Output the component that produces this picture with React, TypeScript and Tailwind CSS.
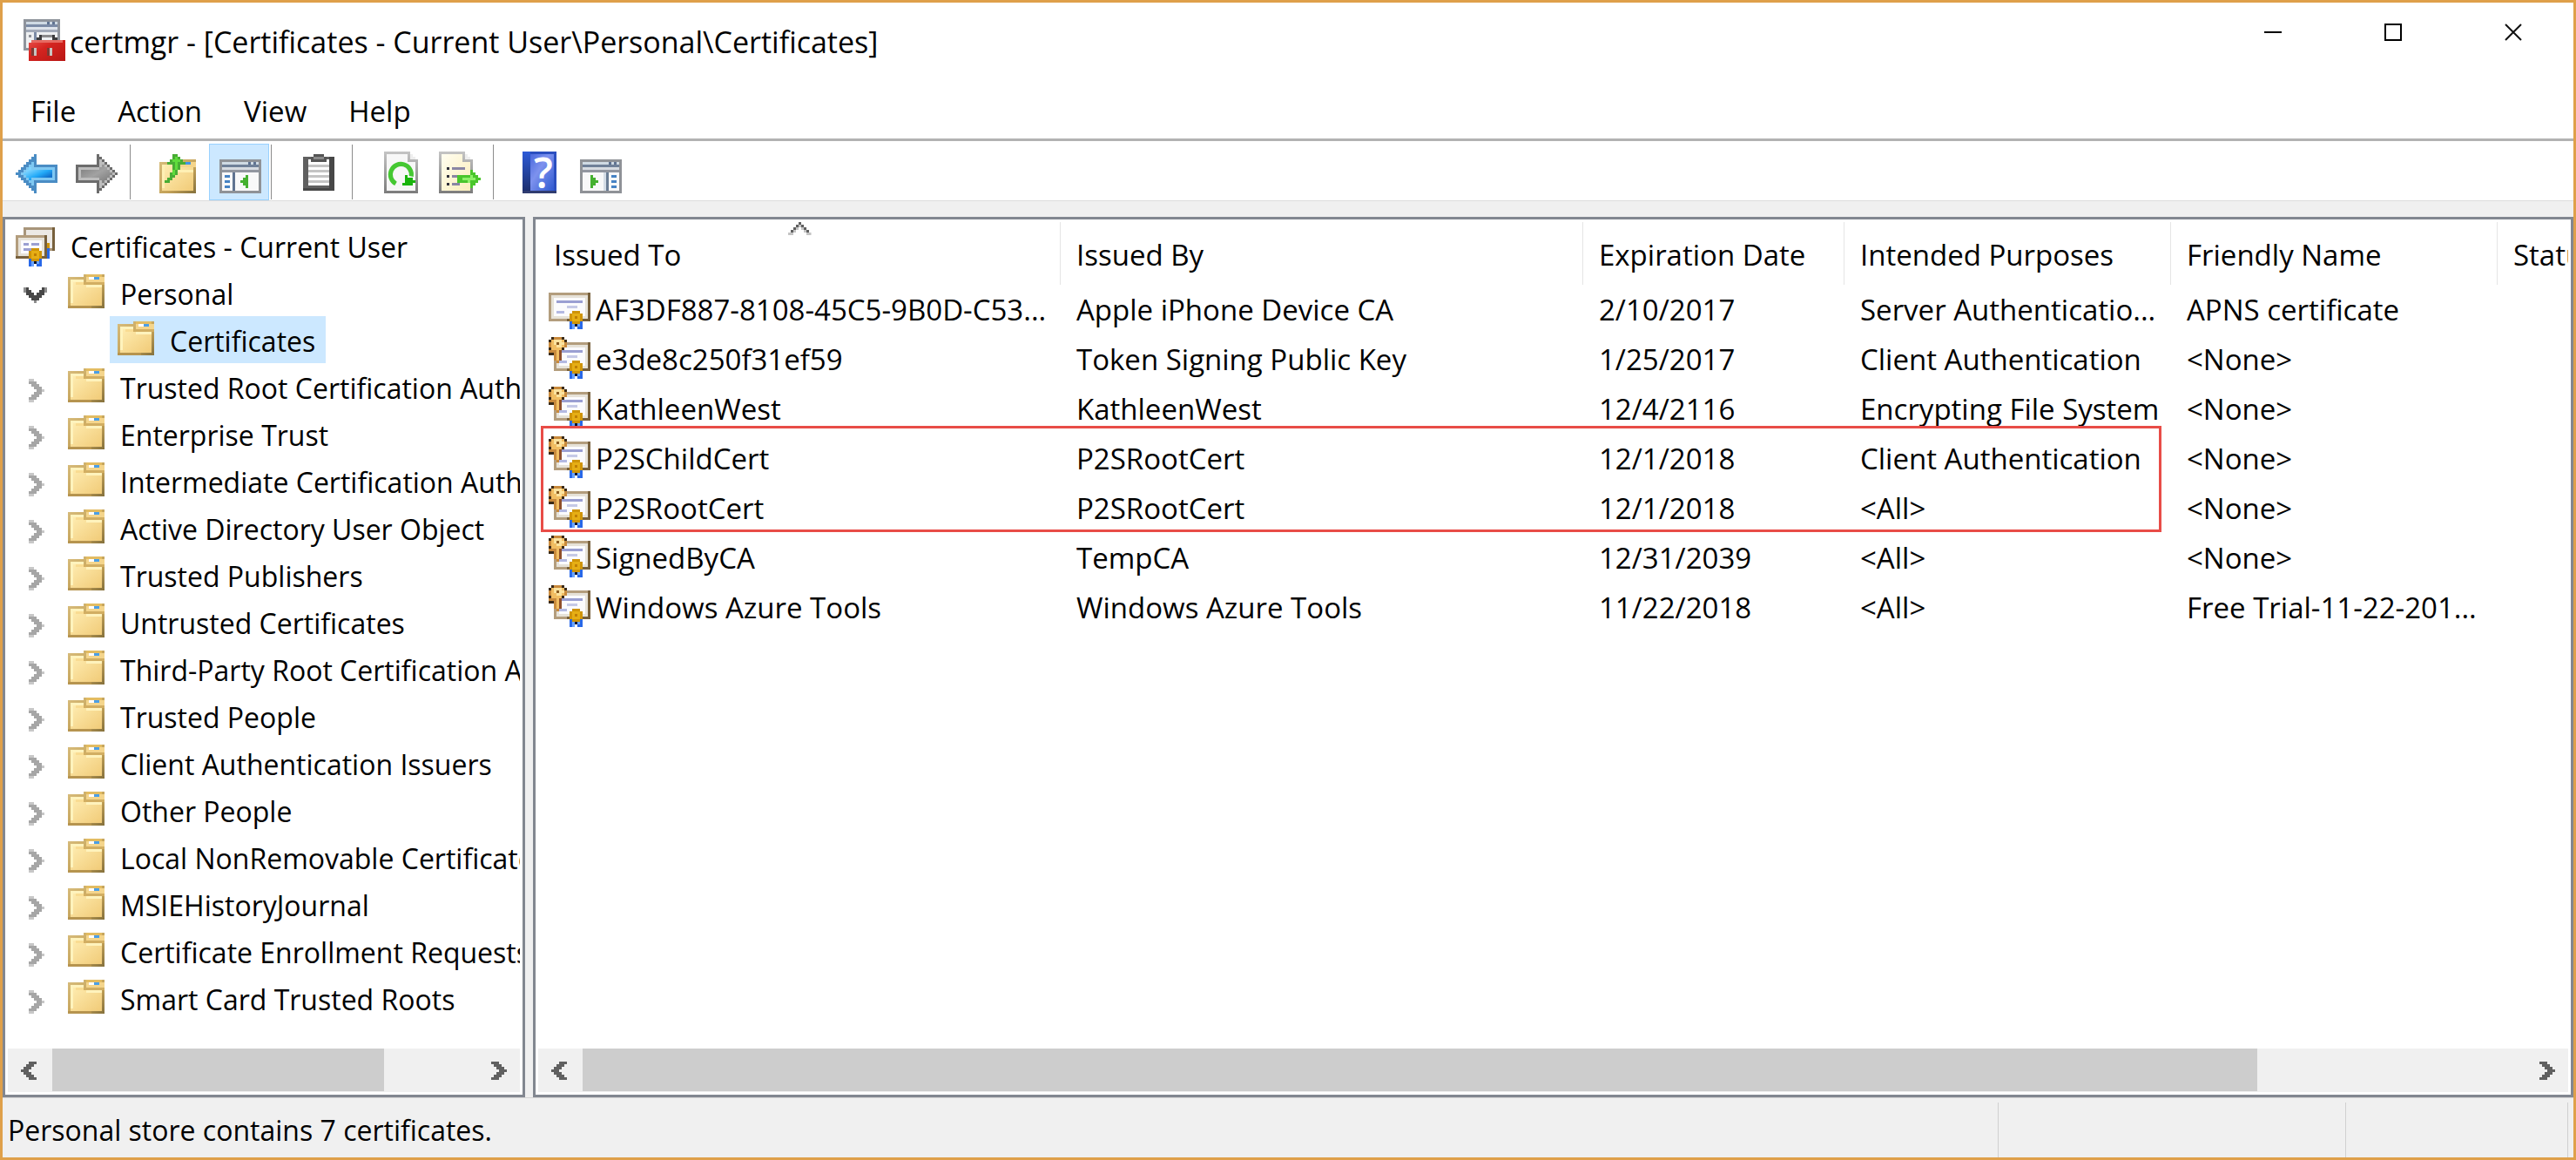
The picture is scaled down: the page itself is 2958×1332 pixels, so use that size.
import type { ReactNode } from 'react'
import { clsx } from 'clsx'

type TreeNode = {
  label: string
  level: 0 | 1 | 2
  state?: 'open' | 'closed'
  selected?: boolean
}

const tree: TreeNode[] = [
  { label: 'Certificates - Current User', level: 0 },
  { label: 'Personal', level: 1, state: 'open' },
  { label: 'Certificates', level: 2, selected: true },
  { label: 'Trusted Root Certification Authorities', level: 1, state: 'closed' },
  { label: 'Enterprise Trust', level: 1, state: 'closed' },
  { label: 'Intermediate Certification Authorities', level: 1, state: 'closed' },
  { label: 'Active Directory User Object', level: 1, state: 'closed' },
  { label: 'Trusted Publishers', level: 1, state: 'closed' },
  { label: 'Untrusted Certificates', level: 1, state: 'closed' },
  { label: 'Third-Party Root Certification Authorities', level: 1, state: 'closed' },
  { label: 'Trusted People', level: 1, state: 'closed' },
  { label: 'Client Authentication Issuers', level: 1, state: 'closed' },
  { label: 'Other People', level: 1, state: 'closed' },
  { label: 'Local NonRemovable Certificates', level: 1, state: 'closed' },
  { label: 'MSIEHistoryJournal', level: 1, state: 'closed' },
  { label: 'Certificate Enrollment Requests', level: 1, state: 'closed' },
  { label: 'Smart Card Trusted Roots', level: 1, state: 'closed' },
]

const columns = [
  'Issued To',
  'Issued By',
  'Expiration Date',
  'Intended Purposes',
  'Friendly Name',
  'Status',
]

const certificates = [
  ['AF3DF887-8108-45C5-9B0D-C53...', 'Apple iPhone Device CA', '2/10/2017', 'Server Authenticatio...', 'APNS certificate'],
  ['e3de8c250f31ef59', 'Token Signing Public Key', '1/25/2017', 'Client Authentication', '<None>'],
  ['KathleenWest', 'KathleenWest', '12/4/2116', 'Encrypting File System', '<None>'],
  ['P2SChildCert', 'P2SRootCert', '12/1/2018', 'Client Authentication', '<None>'],
  ['P2SRootCert', 'P2SRootCert', '12/1/2018', '<All>', '<None>'],
  ['SignedByCA', 'TempCA', '12/31/2039', '<All>', '<None>'],
  ['Windows Azure Tools', 'Windows Azure Tools', '11/22/2018', '<All>', 'Free Trial-11-22-201...'],
]

// All icons are drawn on a 16x16 grid, three screen pixels per cell.
function Icon({ children }: { children: ReactNode }) {
  return (
    <svg
      viewBox="0 0 16 16"
      className="size-12 shrink-0"
      shapeRendering="crispEdges"
      aria-hidden="true"
    >
      {children}
    </svg>
  )
}

function Gradients() {
  return (
    <svg className="absolute size-0" aria-hidden="true">
      <defs>
        <linearGradient id="folder" x1="0" y1="0" x2="1" y2="1">
          <stop offset="0" stopColor="#ffeeb4" />
          <stop offset="1" stopColor="#f1cb78" />
        </linearGradient>
        <linearGradient id="folder-edge" x1="0" y1="0" x2="1" y2="1">
          <stop offset="0" stopColor="#d8bd7c" />
          <stop offset="0.6" stopColor="#c4a258" />
          <stop offset="1" stopColor="#84703c" />
        </linearGradient>
        <linearGradient id="blue-arrow" x1="0" y1="0" x2="1" y2="1">
          <stop offset="0.2" stopColor="#7fd4ff" />
          <stop offset="0.55" stopColor="#22aaf8" />
          <stop offset="0.8" stopColor="#1273cf" />
        </linearGradient>
        <linearGradient id="gray-arrow" x1="0" y1="0" x2="1" y2="1">
          <stop offset="0" stopColor="#7a7a7a" />
          <stop offset="0.5" stopColor="#a2a2a2" />
          <stop offset="1" stopColor="#757575" />
        </linearGradient>
        <linearGradient id="page-edge" x1="0" y1="0" x2="0" y2="1">
          <stop offset="0" stopColor="#c4c4c4" />
          <stop offset="1" stopColor="#7c7c7c" />
        </linearGradient>
        <linearGradient id="cream" x1="0" y1="0" x2="1" y2="1">
          <stop offset="0" stopColor="#fffdf0" />
          <stop offset="1" stopColor="#fbeebb" />
        </linearGradient>
        <linearGradient id="red" x1="0" y1="0" x2="1" y2="1">
          <stop offset="0" stopColor="#e8504a" />
          <stop offset="0.4" stopColor="#d42420" />
          <stop offset="1" stopColor="#b81614" />
        </linearGradient>
        <linearGradient id="book" x1="0" y1="0" x2="1" y2="1">
          <stop offset="0" stopColor="#4a68dc" />
          <stop offset="0.4" stopColor="#7d92ee" />
          <stop offset="1" stopColor="#2f58d0" />
        </linearGradient>
        <linearGradient id="spine" x1="0" y1="0" x2="0" y2="1">
          <stop offset="0" stopColor="#2c5ad8" />
          <stop offset="1" stopColor="#1b2c68" />
        </linearGradient>
      </defs>
    </svg>
  )
}

function FolderIcon() {
  return (
    <Icon>
      <path d="M1 2H7V1H15V14H1Z" fill="url(#folder-edge)" />
      <path d="M2 3H7V5H14V13H2Z" fill="url(#folder)" />
      <path d="M2 3H7V4H3V12H2ZM8 5H14V6H8Z" fill="#fff3bd" />
      <path d="M4 4H7V5H4Z" fill="#f9dc92" />
      <path d="M8 1H14V2H8Z" fill="#e3bc62" />
      <path d="M8 2H15V4H8Z" fill="#f4d58c" />
      <path d="M7 4H15V5H7Z" fill="#d2ae62" />
      <path d="M9 2H11V3H9Z" fill="#fff" />
      <path d="M11 2H13V3H11Z" fill="#4b9fe6" />
      <path d="M1 13H10V14H1Z" fill="#b6944f" />
    </Icon>
  )
}

function Seal({ x, y }: { x: number; y: number }) {
  return (
    <g transform={`translate(${x} ${y})`}>
      <path d="M0 3H5V6H0Z" fill="#2868e8" />
      <path d="M1 4H2V5H1ZM3 4H4V5H3ZM1 5H2V6H1Z" fill="#6aa4ff" />
      <path d="M2 4H3V5H2Z" fill="#0a1430" />
      <path d="M2 5H3V6H2Z" fill="#fff" />
      <path d="M1 -1H4V0H5V3H4V4H1V3H0V0H1Z" fill="#cf9408" />
      <path d="M1 0H4V3H1Z" fill="#e6ae14" />
      <path d="M2 1H3V2H2Z" fill="#c07f04" />
    </g>
  )
}

function CertificateIcon({ hasKey }: { hasKey: boolean }) {
  return (
    <Icon>
      <path d={hasKey ? 'M2 2H16V13H2Z' : 'M0 2H16V13H0Z'} fill="#b39d7d" />
      <path d="M15 2H16V13H15ZM7 12H16V13H7Z" fill="#77603c" />
      <path d={hasKey ? 'M3 3H15V12H3Z' : 'M1 3H15V12H1Z'} fill="#e6e2d8" />
      <path d={hasKey ? 'M4 4H14V11H4Z' : 'M2 4H14V11H2Z'} fill="#fbfbfd" />
      <path d={hasKey ? 'M5 5H13V6H5Z' : 'M3 5H13V6H3Z'} fill="#9a9fd2" />
      <path d="M7 7H11V8H7Z" fill="#c5c9e6" />
      <path d={hasKey ? 'M4 9H7V10H4Z' : 'M3 9H6V10H3Z'} fill="#b3b9e2" />
      <Seal x={8} y={10} />
      {hasKey && (
        <>
          <path d="M1 0H6V1H7V4H6V5H5V9H4V10H3V9H2V7H0V5H1V4H0V1H1Z" fill="#c98a3c" />
          <path d="M1 1H6V4H5V5H4V9H3V5H1Z" fill="#f1bd62" />
          <path d="M2 1H5V2H6V3H5V4H3V3H2Z" fill="#fbe3a0" />
          <path d="M3 2H4V3H3Z" fill="#8a5a20" />
          <path d="M1 0H2V1H1ZM5 0H6V1H5ZM0 1H1V2H0ZM6 1H7V2H6ZM0 4H1V5H0ZM0 6H2V7H0ZM5 4H6V5H5Z" fill="#3a2a18" />
          <path d="M4 5H5V9H4Z" fill="#8f4f2a" />
        </>
      )}
    </Icon>
  )
}

function CertificateStoreIcon() {
  return (
    <Icon>
      <path d="M3 1H15V10H3Z" fill="#a8957a" />
      <path d="M14 1H15V10H14Z" fill="#77603c" />
      <path d="M4 2H14V9H4Z" fill="#ece9e4" />
      <path d="M12 7H13V9H12Z" fill="#cf9408" />
      <path d="M12 9H13V13H12Z" fill="#2868e8" />
      <path d="M0 4H12V13H0Z" fill="#b39d7d" />
      <path d="M11 4H12V13H11ZM0 12H12V13H0Z" fill="#77603c" />
      <path d="M1 5H11V12H1Z" fill="#e6e2d8" />
      <path d="M2 6H10V11H2Z" fill="#fbfbfd" />
      <path d="M3 7H5V8H3ZM6 7H9V8H6ZM3 9H6V10H3Z" fill="#9a9fd2" />
      <Seal x={5} y={10} />
    </Icon>
  )
}

function ConsoleIcon({ side }: { side: 'left' | 'right' }) {
  return (
    <Icon>
      <path d="M0 3H16V16H0Z" fill="#8f9297" />
      <path d="M1 4H15V5H1Z" fill="#cfdae3" />
      <path d="M11 4H12V5H11ZM13 4H14V5H13Z" fill="#5f7391" />
      <path d="M1 5H15V6H1Z" fill="#6f8098" />
      <path d="M1 6H15V7H1Z" fill="#d6dbe1" />
      <path d="M1 7H15V8H1Z" fill="#9296a0" />
      <path d="M1 8H15V15H1Z" fill="#f8f8f9" />
      {side === 'left' ? (
        <>
          <path d="M2 9H4V10H2ZM2 11H4V12H2ZM2 13H4V14H2Z" fill="#4783c4" />
          <path d="M5 8H6V15H5Z" fill="#5f7391" />
          <path d="M10 9H11V14H10V13H9V12H8V11H9V10H10Z" fill="#45b030" />
        </>
      ) : (
        <>
          <path d="M12 9H14V10H12ZM12 11H14V12H12ZM12 13H14V14H12Z" fill="#4783c4" />
          <path d="M9 8H10V15H9Z" fill="#d5dde6" />
          <path d="M10 8H11V15H10Z" fill="#6b7d95" />
          <path d="M4 9H5V10H6V11H7V12H6V13H5V14H4Z" fill="#45b030" />
        </>
      )}
    </Icon>
  )
}

function AppIcon() {
  return (
    <Icon>
      <path d="M0 0H14V12H0Z" fill="#8f949c" />
      <path d="M1 1H13V2H1Z" fill="#cfdae3" />
      <path d="M9 1H10V2H9ZM11 1H12V2H11Z" fill="#5f7391" />
      <path d="M1 2H13V3H1Z" fill="#7b8ba6" />
      <path d="M1 3H13V4H1Z" fill="#dde3ea" />
      <path d="M1 4H13V5H1Z" fill="#a1a9b8" />
      <path d="M1 5H13V11H1Z" fill="#eef0f2" />
      <path d="M4 5H5V9H4Z" fill="#7b8ba6" />
      <path d="M2 6H3V7H2Z" fill="#8d9098" />
      <path d="M5 7H6V6H12V7H13V8H11V7H7V8H5Z" fill="#3b3b3d" />
      <path d="M7 6H11V7H7Z" fill="#8b8b8d" />
      <path d="M2 9H3V8H16V16H2Z" fill="url(#red)" />
      <path d="M3 8H15V9H3Z" fill="#e66a62" />
      <path d="M4 11H5V14H4ZM10 11H11V14H10Z" fill="#c9c4c0" />
      <path d="M3 11H4V14H3ZM9 11H10V14H9Z" fill="#7e3a34" />
    </Icon>
  )
}

function BackIcon() {
  return (
    <Icon>
      <path d="M0 8H1V7H2V6H3V5H4V4H5V3H6V2H7V1H8V5H16V12H8V16H7V15H6V14H5V13H4V12H3V11H2V10H1V9H0Z" fill="#4a8cc4" />
      <path d="M2 8H3V7H4V6H5V5H6V4H7V6H15V11H7V13H6V12H5V11H4V10H3V9H2Z" fill="#7fc8f2" />
      <path d="M3 8H4V7H5V6H6V7H14V10H6V11H5V10H4V9H3Z" fill="url(#blue-arrow)" />
    </Icon>
  )
}

function ForwardIcon() {
  return (
    <Icon>
      <path d="M16 8H15V7H14V6H13V5H12V4H11V3H10V2H9V1H8V5H0V12H8V16H9V15H10V14H11V13H12V12H13V11H14V10H15V9H16Z" fill="#6c6c6c" />
      <path d="M15 8H14V7H13V6H12V5H11V4H10V3H9V6H1V11H9V14H10V13H11V12H12V11H13V10H14V9H15Z" fill="#bdbdbd" />
      <path d="M14 8H13V7H12V6H11V5H10V6H9V7H2V10H9V11H10V12H11V11H12V10H13V9H14Z" fill="url(#gray-arrow)" />
    </Icon>
  )
}

function UpFolderIcon() {
  return (
    <Icon>
      <path d="M0 4H7V3H14V16H0Z" fill="url(#folder-edge)" />
      <path d="M1 5H13V15H1Z" fill="url(#folder)" />
      <path d="M8 4H14V6H8Z" fill="#f4d58c" />
      <path d="M7 7H13V8H7ZM1 5H2V14H1Z" fill="#fff0b4" />
      <path d="M10 4H12V5H10Z" fill="#3f95e8" />
      <path d="M5 1H7V2H8V3H9V4H10V5H8V7H7V9H6V10H5V11H4V12H2V11H3V10H4V8H5V5H3V4H4V3H5Z" fill="#48ad34" />
      <path d="M6 2H7V3H8V4H7V7H6V9H5V7H6V4H5V3H6Z" fill="#5fdc3c" />
    </Icon>
  )
}

function ClipboardIcon() {
  return (
    <Icon>
      <path d="M2 2H14V15H2Z" fill="#606060" />
      <path d="M12 2H14V15H2V14H12Z" fill="#474747" />
      <path d="M4 3H12V13H4Z" fill="#fff" />
      <path d="M4 5H12V6H4ZM4 7H12V8H4ZM4 9H12V10H4ZM4 11H12V12H4Z" fill="#c4c4c4" />
      <path d="M6 1H10V2H11V4H5V2H6Z" fill="#555" />
      <path d="M6 2H10V3H6Z" fill="#8a8a8a" />
    </Icon>
  )
}

function RefreshIcon() {
  return (
    <Icon>
      <path d="M2 0H12V1H13V2H14V3H15V16H2Z" fill="url(#page-edge)" />
      <path d="M3 1H11V4H14V15H3Z" fill="#f7f7f7" />
      <path d="M12 1V3H14V2H13V1Z" fill="#eee" />
      <path
        d="M6.5 12.3A4 4 0 1 1 12.4 9.5"
        fill="none"
        stroke="#45c832"
        strokeWidth="1.7"
        shapeRendering="geometricPrecision"
      />
      <path d="M10 9H11V10H13V11H14V12H13V13H9V12H10Z" fill="#19b40c" />
    </Icon>
  )
}

function ExportIcon() {
  return (
    <Icon>
      <path d="M0 0H10V1H11V2H12V3H13V16H0Z" fill="url(#page-edge)" />
      <path d="M1 1H9V4H12V15H1Z" fill="url(#cream)" />
      <path d="M10 1V3H12V2H11V1Z" fill="#eee" />
      <path d="M3 6H4V7H3ZM3 9H4V10H3ZM3 12H4V13H3Z" fill="#2f2f3a" />
      <path d="M5 6H10V7H5ZM5 9H8V10H5ZM5 12H8V13H5Z" fill="#8a86a4" />
      <path d="M7 9H12V7H13V8H14V9H15V10H16V11H15V12H14V13H13V14H12V12H7Z" fill="#4ac62c" />
      <path d="M9 10H12V9H13V10H14V11H12V12H11V11H9Z" fill="#8df068" />
    </Icon>
  )
}

function HelpIcon() {
  return (
    <Icon>
      <path d="M1 0H14V16H1Z" fill="#2b4fc0" />
      <path d="M1 0H4V16H1Z" fill="url(#spine)" />
      <path d="M4 1H13V15H4Z" fill="url(#book)" />
      <path d="M1 15H14V16H1Z" fill="#303c70" />
      <text x="9" y="14" textAnchor="middle" fontSize="16" fontWeight="600" fill="#fff">
        ?
      </text>
    </Icon>
  )
}

function TreeChevron({ open }: { open: boolean }) {
  return (
    <Icon>
      {open ? (
        <>
          <path d="M3 6H5V7H6V8H7V9H8V8H9V7H10V6H12V8H11V9H10V10H9V11H8V12H7V11H6V10H5V9H4V8H3Z" fill="#484848" />
          <path d="M3 6H4V7H3ZM11 6H12V7H11ZM3 7H4V8H3ZM11 7H12V8H11ZM7 11H8V12H7Z" fill="#8e8e8e" />
        </>
      ) : (
        <>
          <path d="M5 5H7V6H8V7H9V8H10V9H11V10H10V11H9V12H8V13H7V14H5V12H6V11H7V10H8V9H7V8H6V7H5Z" fill="#a6a6a6" />
          <path d="M5 5H7V6H5ZM5 13H7V14H5ZM10 9H11V10H10Z" fill="#c8c8c8" />
        </>
      )}
    </Icon>
  )
}

function ToolButton({
  label,
  active = false,
  children,
}: {
  label: string
  active?: boolean
  children: ReactNode
}) {
  return (
    <button
      type="button"
      aria-label={label}
      aria-pressed={active || undefined}
      className={clsx(
        'flex h-[65px] w-[69px] items-center border pl-[11px]',
        active ? 'border-[#99d1ff] bg-[#cce8ff]' : 'border-transparent',
      )}
    >
      {children}
    </button>
  )
}

function ToolSeparator({ className }: { className: string }) {
  return <span className={clsx('my-px w-px self-stretch bg-[#8c8c8c]', className)} />
}

function ScrollArrow({ direction }: { direction: 'left' | 'right' }) {
  return (
    <button
      type="button"
      aria-label={`Scroll ${direction}`}
      className={clsx(
        'flex w-[51px] items-center justify-center',
        direction === 'left' ? 'pr-[3px]' : 'pl-[3px]',
      )}
    >
      <svg viewBox="0 0 6 7" className="h-[21px] w-[18px]" shapeRendering="crispEdges" aria-hidden="true">
        <path
          d={
            direction === 'left'
              ? 'M3 0H6V1H5V2H4V3H3V4H4V5H5V6H6V7H3V6H2V5H1V4H0V3H1V2H2V1H3Z'
              : 'M3 0H0V1H1V2H2V3H3V4H2V5H1V6H0V7H3V6H4V5H5V4H6V3H5V2H4V1H3Z'
          }
          fill="#606060"
        />
      </svg>
    </button>
  )
}

function ScrollBar({ visible, total }: { visible: number; total: number }) {
  return (
    <div className="mx-[3px] mb-[3px] flex h-[50px] shrink-0 bg-[#f0f0f0]">
      <ScrollArrow direction="left" />
      <div className="flex-1">
        <div
          className="h-[49px] bg-[#cdcdcd]"
          style={{ width: `${(visible / total) * 100}%` }}
        />
      </div>
      <ScrollArrow direction="right" />
    </div>
  )
}

function TitleBar() {
  return (
    <header className="flex h-[94px] justify-between pl-6">
      <div className="flex items-center gap-[5px] pb-2">
        <AppIcon />
        <h1 className="pt-1 text-[34px]">certmgr - [Certificates - Current User\Personal\Certificates]</h1>
      </div>
      <div className="flex h-[68px]">
        <button type="button" aria-label="Minimize" className="flex w-[138px] items-center justify-center">
          <span className="h-0.5 w-5 bg-black" />
        </button>
        <button type="button" aria-label="Maximize" className="flex w-[138px] items-center justify-center">
          <span className="size-5 border-2 border-black" />
        </button>
        <button type="button" aria-label="Close" className="flex w-[138px] items-center justify-center">
          <svg viewBox="0 0 20 20" className="size-5" aria-hidden="true">
            <path d="M1 1L19 19M19 1L1 19" stroke="#111" strokeWidth="2" />
          </svg>
        </button>
      </div>
    </header>
  )
}

function MenuBar() {
  return (
    <nav className="flex h-[62px] items-center pl-2 text-[33px]">
      {['File', 'Action', 'View', 'Help'].map((item) => (
        <button key={item} type="button" className="px-6">
          {item}
        </button>
      ))}
    </nav>
  )
}

function ToolBar() {
  return (
    <div
      role="toolbar"
      className="flex border-t-3 border-b border-t-[#b2b2b2] border-b-[#dcdcdc] pt-[3px] pl-[3px]"
    >
      <ToolButton label="Back">
        <BackIcon />
      </ToolButton>
      <ToolButton label="Forward">
        <ForwardIcon />
      </ToolButton>
      <ToolSeparator className="mr-[21px] ml-[5px]" />
      <ToolButton label="Up one level">
        <UpFolderIcon />
      </ToolButton>
      <ToolButton label="Show or hide console tree" active>
        <ConsoleIcon side="left" />
      </ToolButton>
      <ToolSeparator className="mr-[18px] ml-0.5" />
      <ToolButton label="Paste">
        <ClipboardIcon />
      </ToolButton>
      <ToolSeparator className="mr-[18px] ml-[5px]" />
      <ToolButton label="Refresh">
        <RefreshIcon />
      </ToolButton>
      <ToolButton label="Export list">
        <ExportIcon />
      </ToolButton>
      <ToolSeparator className="mr-[18px] ml-[5px]" />
      <ToolButton label="Help">
        <HelpIcon />
      </ToolButton>
      <ToolButton label="Show or hide action pane">
        <ConsoleIcon side="right" />
      </ToolButton>
    </div>
  )
}

function TreeRow({ node }: { node: TreeNode }) {
  return (
    <li
      role="treeitem"
      aria-level={node.level + 1}
      aria-selected={node.selected}
      className={clsx(
        'flex h-[54px] items-center',
        node.level === 0 && 'pl-[3px]',
        node.level === 1 && 'pl-[9px]',
        node.level === 2 && 'pl-[117px]',
      )}
    >
      {node.state && <TreeChevron open={node.state === 'open'} />}
      <button
        type="button"
        className={clsx(
          'flex h-full items-center gap-[15px] pr-3 pl-1.5 whitespace-nowrap',
          node.selected && 'bg-[#cce8ff]',
          node.state && 'ml-[3px]',
        )}
      >
        {node.level === 0 ? <CertificateStoreIcon /> : <FolderIcon />}
        <span className="pt-1">{node.label}</span>
      </button>
    </li>
  )
}

function TreePane() {
  return (
    <aside className="flex w-[600px] shrink-0 flex-col border-3 border-[#828790] bg-white">
      <ul role="tree" className="m-[3px] flex-1 overflow-hidden">
        {tree.map((node) => (
          <TreeRow key={node.label} node={node} />
        ))}
      </ul>
      <ScrollBar visible={381} total={486} />
    </aside>
  )
}

function CertificateTable() {
  return (
    <table className="w-full table-fixed text-[33px]">
      <colgroup>
        <col className="w-[600px]" />
        <col className="w-[600px]" />
        <col className="w-[300px]" />
        <col className="w-[375px]" />
        <col className="w-[375px]" />
        <col />
      </colgroup>
      <thead>
        <tr className="h-[75px]">
          {columns.map((column, i) => (
            <th key={column} className="relative overflow-hidden p-0 pt-[3px] text-left font-normal whitespace-nowrap">
              {i === 0 && (
                <svg
                  viewBox="0 0 9 5"
                  className="absolute top-[3px] left-1/2 h-[15px] w-[27px] -translate-x-1/2"
                  shapeRendering="crispEdges"
                  aria-hidden="true"
                >
                  <path d="M4 0H5V1H6V2H7V3H8V4H9V5H7V4H6V3H5V2H4V3H3V4H2V5H0V4H1V3H2V2H3V1H4Z" fill="#c4c4c4" />
                  <path d="M4 0H5V1H6V2H7V3H8V4H7V3H6V2H5V1H4V2H3V3H2V4H1V3H2V2H3V1H4Z" fill="#606060" />
                </svg>
              )}
              <div className={clsx('flex h-[72px] items-center pt-1 pl-[18px]', i < 5 && 'border-r border-[#e5e5e5]')}>
                {column}
              </div>
            </th>
          ))}
        </tr>
      </thead>
      <tbody>
        {certificates.map((cells, row) => (
          <tr key={cells[0]} className="h-[57px]">
            {cells.map((cell, i) => (
              <td key={i} className={clsx('p-0 whitespace-nowrap', i === 0 ? 'pl-3' : 'pl-[18px]')}>
                {i === 0 ? (
                  <div className="flex h-[51px] gap-1.5">
                    <CertificateIcon hasKey={row > 0} />
                    <span className="self-center">{cell}</span>
                  </div>
                ) : (
                  cell
                )}
              </td>
            ))}
            <td />
          </tr>
        ))}
      </tbody>
    </table>
  )
}

function ListPane() {
  return (
    <main className="flex min-w-0 flex-1 flex-col border-3 border-[#828790] bg-white">
      <div className="relative mx-[3px] flex-1 overflow-hidden">
        <CertificateTable />
        {/* marks the root and child certificates */}
        <div className="absolute top-[237px] left-[3px] h-[122px] w-[1861px] border-3 border-[#e84c47]" />
      </div>
      <ScrollBar visible={1923} total={2229} />
    </main>
  )
}

function StatusBar() {
  return (
    <footer className="flex h-[69px] border-t border-[#d4d4d4] pt-[5px] pr-1.5">
      <p className="flex flex-1 items-center pl-1.5">Personal store contains 7 certificates.</p>
      <span className="w-[399px] border-l border-[#d0d0d0]" />
      <span className="w-[256px] border-x border-[#d0d0d0]" />
    </footer>
  )
}

export default function App() {
  return (
    <div className="flex h-screen flex-col border-3 border-[#dfa04a] bg-[#f0f0f0] font-['Open_Sans','Noto_Sans',sans-serif] text-[32px] leading-[48px] text-black">
      <Gradients />
      <div className="bg-white">
        <TitleBar />
        <MenuBar />
        <ToolBar />
      </div>
      <div className="flex min-h-0 flex-1 gap-[9px] pt-[18px]">
        <TreePane />
        <ListPane />
      </div>
      <StatusBar />
    </div>
  )
}
